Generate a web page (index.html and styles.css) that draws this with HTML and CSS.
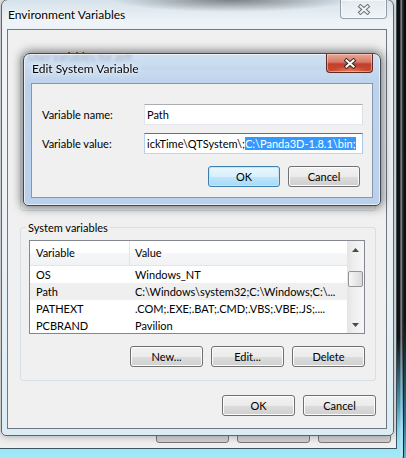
FILE: index.html
```html
<!DOCTYPE html>
<html lang="en">
  <head>
    <meta charset="UTF-8" />
    <title>Environment Variables</title>
    <link rel="stylesheet" href="styles.css">
  </head>
  <body>
    <div class="desktop">
      <!-- System Properties, behind everything -->
      <div class="window sysprops">
        <div class="sysprops-client">
          <div class="ghost-row">
            <span class="ghost-btn"></span>
            <span class="ghost-btn"></span>
            <span class="ghost-btn"></span>
          </div>
        </div>
      </div>

      <!-- Environment Variables (inactive) -->
      <div class="window env-window">
        <div class="titlebar">
          <span class="title">Environment Variables</span>
          <span class="caption-close is-inactive">
            <svg width="14" height="11" viewBox="0 0 14 11">
              <path d="M3.5 2.5L10.5 8.5M10.5 2.5L3.5 8.5" stroke="#6a7075" stroke-width="4" stroke-linecap="square" fill="none" />
              <path d="M3.5 2.5L10.5 8.5M10.5 2.5L3.5 8.5" stroke="#f4f4f4" stroke-width="2" stroke-linecap="square" fill="none" />
            </svg>
          </span>
        </div>
        <div class="client">
          <fieldset class="group group-user">
            <legend>User variables for Jeff</legend>
            <div class="listview listview-user"></div>
          </fieldset>

          <fieldset class="group group-system">
            <legend>System variables</legend>
            <div class="listview">
              <div class="lv-table">
                <div class="lv-header">
                  <span class="lv-cell col-name">Variable</span>
                  <span class="lv-cell col-value">Value</span>
                </div>
                <div class="lv-row">
                  <span class="lv-cell col-name">OS</span>
                  <span class="lv-cell col-value">Windows_NT</span>
                </div>
                <div class="lv-row is-selected">
                  <span class="lv-cell col-name">Path</span>
                  <span class="lv-cell col-value">C:\Windows\system32;C:\Windows;C:\...</span>
                </div>
                <div class="lv-row">
                  <span class="lv-cell col-name">PATHEXT</span>
                  <span class="lv-cell col-value">.COM;.EXE;.BAT;.CMD;.VBS;.VBE;.JS;....</span>
                </div>
                <div class="lv-row">
                  <span class="lv-cell col-name">PCBRAND</span>
                  <span class="lv-cell col-value">Pavilion</span>
                </div>
              </div>
              <div class="scrollbar">
                <span class="sb-arrow">
                  <svg width="7" height="4" viewBox="0 0 7 4"><polygon points="0,4 3.5,0 7,4" fill="#4a4a4a" /></svg>
                </span>
                <span class="sb-thumb"></span>
                <span class="sb-arrow sb-arrow-down">
                  <svg width="7" height="4" viewBox="0 0 7 4"><polygon points="0,0 7,0 3.5,4" fill="#4a4a4a" /></svg>
                </span>
              </div>
            </div>
            <div class="button-row">
              <span class="btn">New...</span>
              <span class="btn">Edit...</span>
              <span class="btn">Delete</span>
            </div>
          </fieldset>

          <div class="button-row dialog-buttons">
            <span class="btn">OK</span>
            <span class="btn">Cancel</span>
          </div>
        </div>
      </div>

      <!-- Edit System Variable (active) -->
      <div class="window edit-dialog">
        <div class="titlebar">
          <span class="title">Edit System Variable</span>
          <span class="caption-close is-active">
            <svg width="14" height="11" viewBox="0 0 14 11">
              <path d="M3.5 2.5L10.5 8.5M10.5 2.5L3.5 8.5" stroke="#3a2a28" stroke-width="4" stroke-linecap="square" fill="none" />
              <path d="M3.5 2.5L10.5 8.5M10.5 2.5L3.5 8.5" stroke="#ffffff" stroke-width="2" stroke-linecap="square" fill="none" />
            </svg>
          </span>
        </div>
        <div class="client edit-client">
          <div class="field-row">
            <span class="field-label">Variable name:</span>
            <span class="textbox">Path</span>
          </div>
          <div class="field-row">
            <span class="field-label">Variable value:</span>
            <span class="textbox is-focused">ickTime\QTSystem\;<span class="selection">C:\Panda3D-1.8.1\bin;</span></span>
          </div>
          <div class="button-row edit-buttons">
            <span class="btn btn-default">OK</span>
            <span class="btn">Cancel</span>
          </div>
        </div>
      </div>
    </div>
  </body>
</html>
```

FILE: styles.css
```css
* {
  margin: 0;
  padding: 0;
  box-sizing: border-box;
}

body {
  width: 406px;
  height: 458px;
  overflow: hidden;
  font-family: Lato, "Open Sans", sans-serif;
  font-size: 11px;
  color: #000;
  background: #0c0c0c;
}

.desktop {
  position: relative;
  width: 406px;
  height: 458px;
  overflow: hidden;
  background: linear-gradient(to bottom, #0b0b0b 0%, #101214 70%, #2f6f86 92%, #5fb7d3 100%);
}

.window {
  position: absolute;
  display: flex;
  flex-direction: column;
}

/* Window behind */
.sysprops {
  left: -12px;
  top: -12px;
  width: 416px;
  height: 474px;
  border: 1px solid #1b2328;
  border-radius: 6px;
  background:
    linear-gradient(to right, transparent 411px, rgba(215, 225, 235, 0.7) 412px, transparent 414px),
    linear-gradient(to bottom, #0e0e0e 0%, #141414 74%, #4f9fba 88%, #86dcf2 93%, #a7eaf8 100%);
}

.sysprops-client {
  flex: 1;
  display: flex;
  flex-direction: column;
  justify-content: flex-end;
  margin: 0 6px 12px 0;
  border: 1px solid #3d5560;
  background: #f0f0f0;
}

.ghost-row {
  display: flex;
  justify-content: flex-end;
  gap: 8px;
  padding: 0 5px 5px 0;
}

.ghost-btn {
  width: 73px;
  height: 21px;
  border: 1px solid #7a7a7a;
  border-radius: 3px;
  background: linear-gradient(#f2f2f2, #ebebeb 50%, #dddddd 51%, #cfcfcf);
}

/* Environment Variables window */
.env-window {
  left: 1px;
  top: -1px;
  width: 393px;
  height: 437px;
  border: 1px solid #5d656b;
  border-radius: 7px 7px 5px 5px;
  background:
    radial-gradient(ellipse 120px 12px at 230px 0, rgba(50, 50, 50, 0.55), transparent),
    linear-gradient(to bottom, #d6e2eb, #eef3f7 22px, #e9f0f5 60%, #dcecf4);
  box-shadow: 0 0 8px rgba(0, 0, 0, 0.35);
}

.titlebar {
  display: flex;
  align-items: center;
  height: 29px;
  padding-left: 6px;
  flex-shrink: 0;
}

.title {
  font-size: 12px;
  text-shadow: 0 0 6px rgba(255, 255, 255, 0.95), 0 0 2px #fff;
}

.caption-close {
  display: flex;
  align-items: center;
  justify-content: center;
  align-self: flex-start;
  margin-left: auto;
  margin-right: 6px;
  width: 47px;
  height: 19px;
  border: 1px solid rgba(90, 100, 110, 0.6);
  border-top: none;
  border-radius: 0 0 4px 4px;
}

.caption-close.is-inactive {
  background: rgba(255, 255, 255, 0.3);
  box-shadow: inset 0 0 0 1px rgba(255, 255, 255, 0.6);
}

.caption-close.is-active {
  margin-right: 7px;
  border-color: #5e2a22;
  background:
    radial-gradient(ellipse 18px 6px at 50% 100%, rgba(255, 150, 110, 0.7), transparent),
    linear-gradient(#e8a898, #d77866 45%, #c2402b 55%, #c94b33);
  box-shadow: inset 0 0 0 1px rgba(255, 220, 210, 0.5);
}

.client {
  flex: 1;
  margin: 0 6px 6px 5px;
  border: 1px solid #6f787e;
  background: #f0f0f0;
  padding: 21px 10px 0 12px;
}

/* Group boxes */
.group {
  min-width: 0;
  border: 1px solid #d5dfe5;
  border-radius: 3px;
  padding: 0 10px 13px 8px;
}

.group legend {
  margin-left: -3px;
  padding: 0 2px;
  line-height: 15px;
}

.group-user legend {
  line-height: 11px;
}

.group-system {
  margin-top: 9px;
}

.button-row {
  display: flex;
  justify-content: flex-end;
  gap: 8px;
  margin-top: 12px;
}

.dialog-buttons {
  margin-top: 14px;
}

.btn {
  display: flex;
  align-items: center;
  justify-content: center;
  width: 73px;
  height: 21px;
  border: 1px solid #707070;
  border-radius: 3px;
  background: linear-gradient(#f2f2f2, #ebebeb 50%, #dddddd 51%, #cfcfcf);
  box-shadow: inset 0 0 0 1px #fcfcfc;
}

.btn-default {
  border-color: #3c7fb1;
  background: linear-gradient(#eaf6fd, #d9f0fc 50%, #bee6fd 51%, #a7d9f5);
  box-shadow: inset 0 0 0 1px #c6e6f8;
}

/* List view */
.listview {
  display: flex;
  height: 94px;
  margin-top: 5px;
  border: 1px solid #828790;
  background: #fff;
  overflow: hidden;
}

.listview-user {
  height: 129px;
  margin-top: 6px;
}

.lv-table {
  flex: 1;
  min-width: 0;
}

.lv-header {
  display: flex;
  height: 25px;
  border-bottom: 1px solid #e2e5e9;
  background: linear-gradient(#ffffff, #ffffff 50%, #f6f7f8 51%, #f1f2f4);
}

.lv-row {
  display: flex;
  height: 17px;
}

.lv-row.is-selected {
  background: #efefef;
}

.lv-cell {
  line-height: 17px;
  white-space: nowrap;
  overflow: hidden;
}

.lv-header .lv-cell {
  line-height: 24px;
}

.col-name {
  width: 99px;
  padding-left: 6px;
}

.col-value {
  flex: 1;
  padding-left: 6px;
}

.lv-header .col-value {
  border-left: 1px solid #e5e5e5;
  padding-left: 5px;
}

.scrollbar {
  width: 17px;
  display: flex;
  flex-direction: column;
  background: linear-gradient(to right, #e4e4e4, #efefef 40%, #f6f6f6);
}

.sb-arrow {
  display: flex;
  align-items: center;
  justify-content: center;
  height: 17px;
}

.sb-arrow-down {
  margin-top: auto;
}

.sb-thumb {
  height: 16px;
  margin: 13px 1px 0;
  border: 1px solid #959595;
  border-radius: 2px;
  background: linear-gradient(to right, #f7f7f7, #e8e8e8 50%, #d9d9d9);
}

/* Edit System Variable dialog */
.edit-dialog {
  left: 23px;
  top: 53px;
  width: 358px;
  height: 153px;
  border: 1px solid #3f4a56;
  border-radius: 7px 7px 5px 5px;
  background: linear-gradient(to bottom, rgba(200, 220, 241, 0.8), rgba(186, 209, 235, 0.95) 30px, #bad1eb);
  backdrop-filter: blur(1.5px);
  box-shadow: 0 0 10px 2px rgba(0, 0, 0, 0.5), inset 0 0 0 1px rgba(255, 255, 255, 0.6);
}

.edit-dialog .titlebar {
  padding-left: 8px;
}

.edit-client {
  margin: 0 7px 7px 7px;
  border-color: #8797ab;
  padding: 20px 9px 0 10px;
}

.field-row {
  display: flex;
  align-items: center;
  margin-bottom: 8px;
}

.field-label {
  width: 102px;
}

.textbox {
  flex: 1;
  height: 21px;
  padding: 0 2px;
  line-height: 19px;
  white-space: nowrap;
  overflow: hidden;
  background: #fff;
  border: 1px solid;
  border-color: #abadb3 #dbdfe6 #e3e9ef #e2e3ea;
}

.textbox.is-focused {
  border-color: #3d7bad #a4c9e3 #b7d9ed #b5cfe7;
}

.selection {
  background: #3399ff;
  color: #fff;
}

.edit-buttons {
  margin-top: 12px;
  padding-right: 3px;
}

.edit-buttons .btn {
  width: 72px;
}
```
